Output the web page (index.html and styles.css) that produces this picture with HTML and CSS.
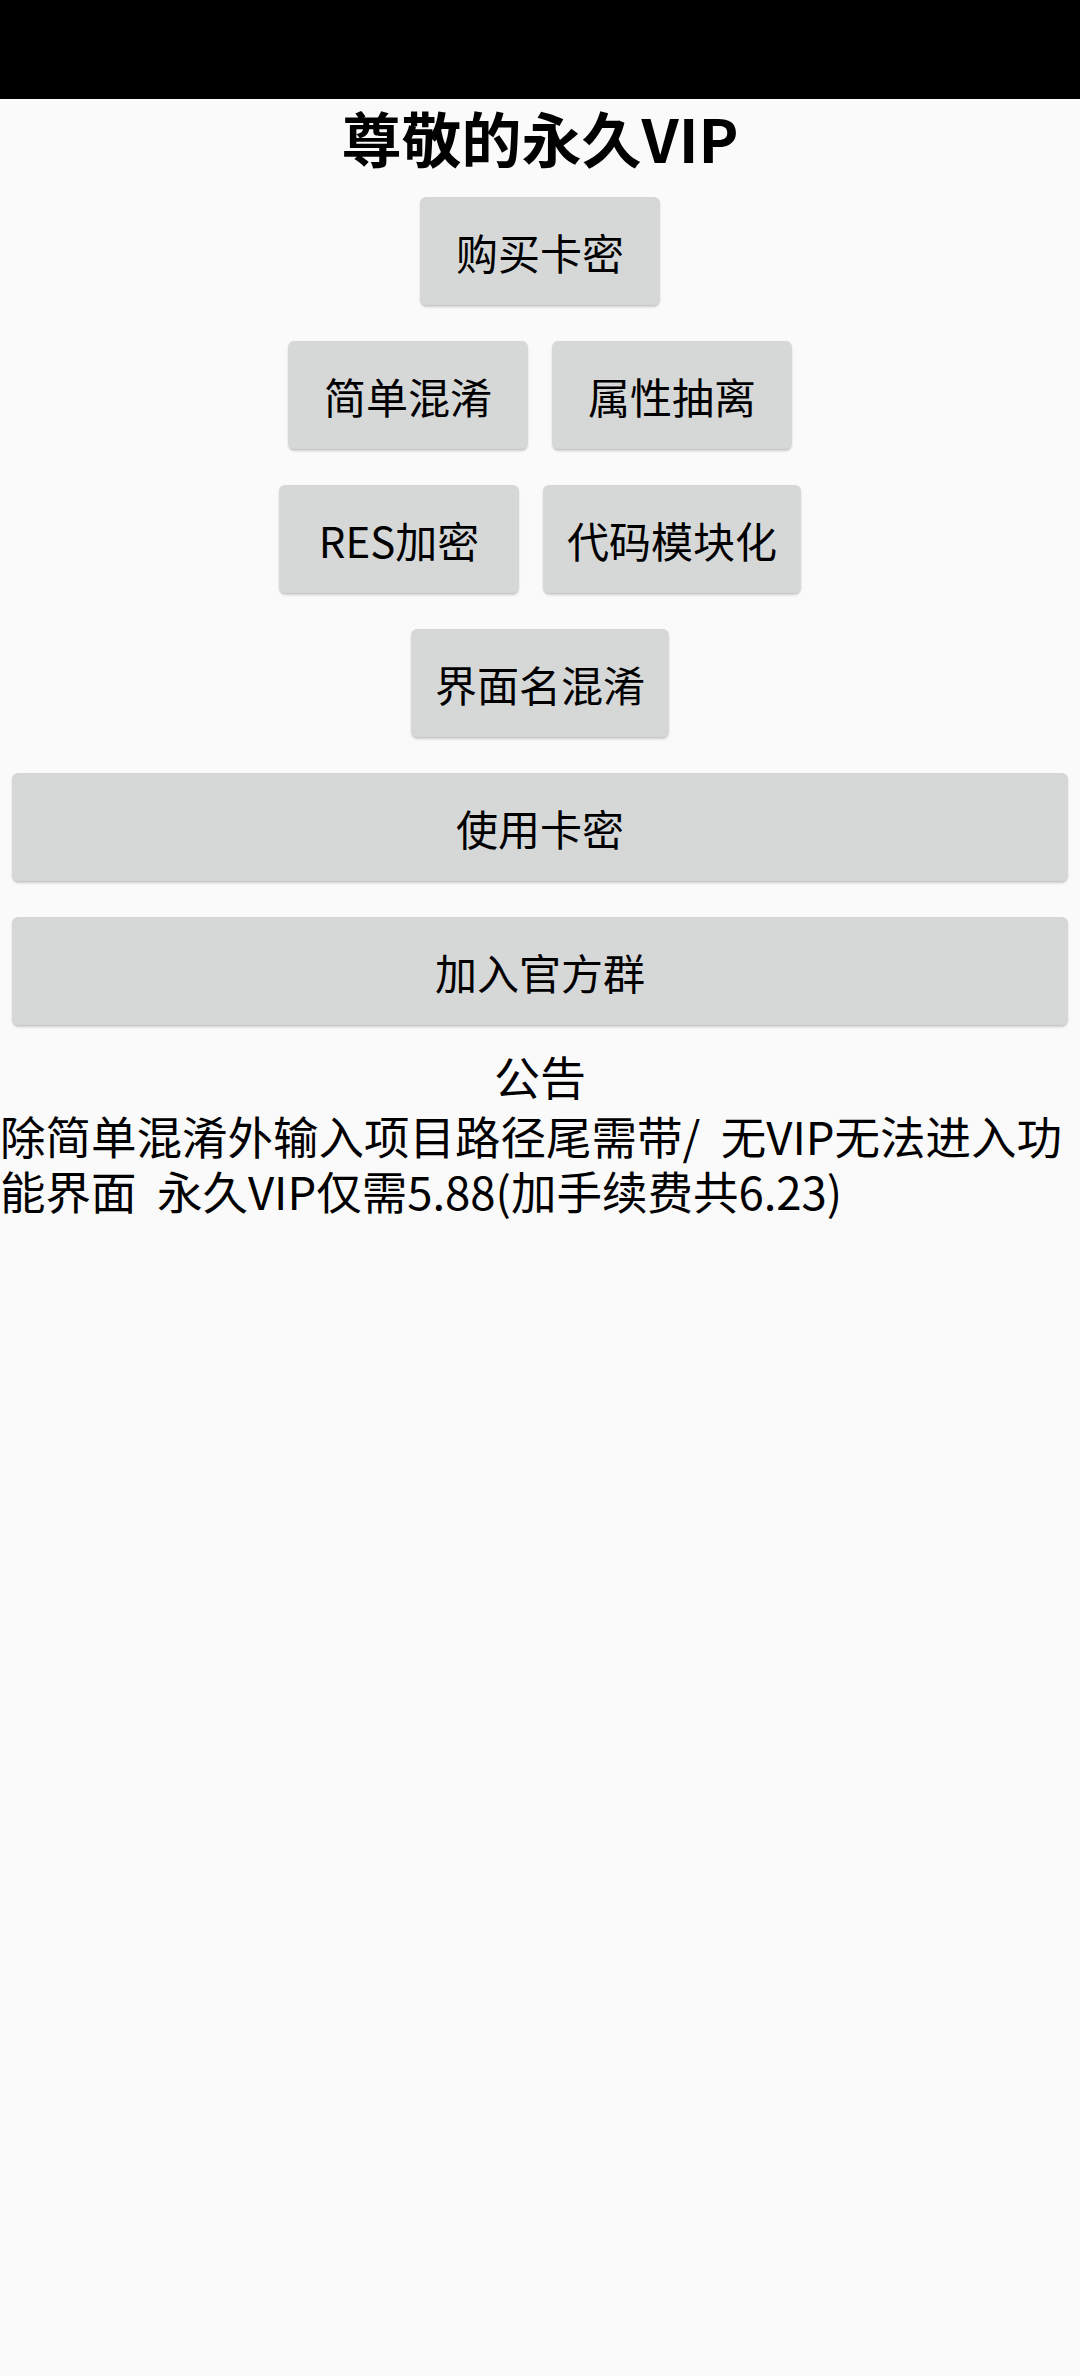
FILE: index.html
```html
<!DOCTYPE html>
<html lang="zh-CN">
<head>
<meta charset="utf-8">
<title>尊敬的永久VIP</title>
<link rel="stylesheet" href="styles.css">
</head>
<body>
<div class="status"></div>
<main class="page">
  <h1 class="title">尊敬的永久VIP</h1>
  <div class="row"><button class="btn">购买卡密</button></div>
  <div class="row"><button class="btn">简单混淆</button><button class="btn">属性抽离</button></div>
  <div class="row"><button class="btn">RES加密</button><button class="btn">代码模块化</button></div>
  <div class="row"><button class="btn">界面名混淆</button></div>
  <div class="row"><button class="btn wide">使用卡密</button></div>
  <div class="row"><button class="btn wide">加入官方群</button></div>
  <div class="notice-title">公告</div>
  <p class="notice">除简单混淆外输入项目路径尾需带/&nbsp;&nbsp;无VIP无法进入功能界面&nbsp;&nbsp;永久VIP仅需5.88(加手续费共6.23)</p>
</main>
</body>
</html>
```
FILE: styles.css
```css
html, body {
  margin: 0;
  padding: 0;
  background: #fafafa;
}
body {
  font-family: "Noto Sans CJK SC", "Noto Sans", sans-serif;
  color: #000;
  min-height: 2376px;
}
.status {
  height: 99px;
  background: #000;
}
.page {
  display: flex;
  flex-direction: column;
}
.title {
  margin: 0;
  height: 80px;
  line-height: 76px;
  font-size: 60px;
  font-weight: 700;
  text-align: center;
}
.row {
  display: flex;
  justify-content: center;
}
.btn {
  margin: 18px 12px;
  height: 108px;
  min-width: 240px;
  padding: 0 24px;
  border: none;
  border-radius: 6px;
  background: #d6d7d7;
  font-family: "Noto Sans CJK SC", "Noto Sans", sans-serif;
  font-size: 42px;
  color: #000;
  white-space: nowrap;
  box-shadow: 0 3px 3px -1px rgba(0, 0, 0, 0.16), 0 1px 2px rgba(0, 0, 0, 0.10);
}
.btn.wide {
  flex: 1;
}
.notice-title {
  font-size: 46px;
  line-height: 65px;
  text-align: center;
}
.notice {
  margin: 0;
  font-size: 45.5px;
  line-height: 55px;
}
```
